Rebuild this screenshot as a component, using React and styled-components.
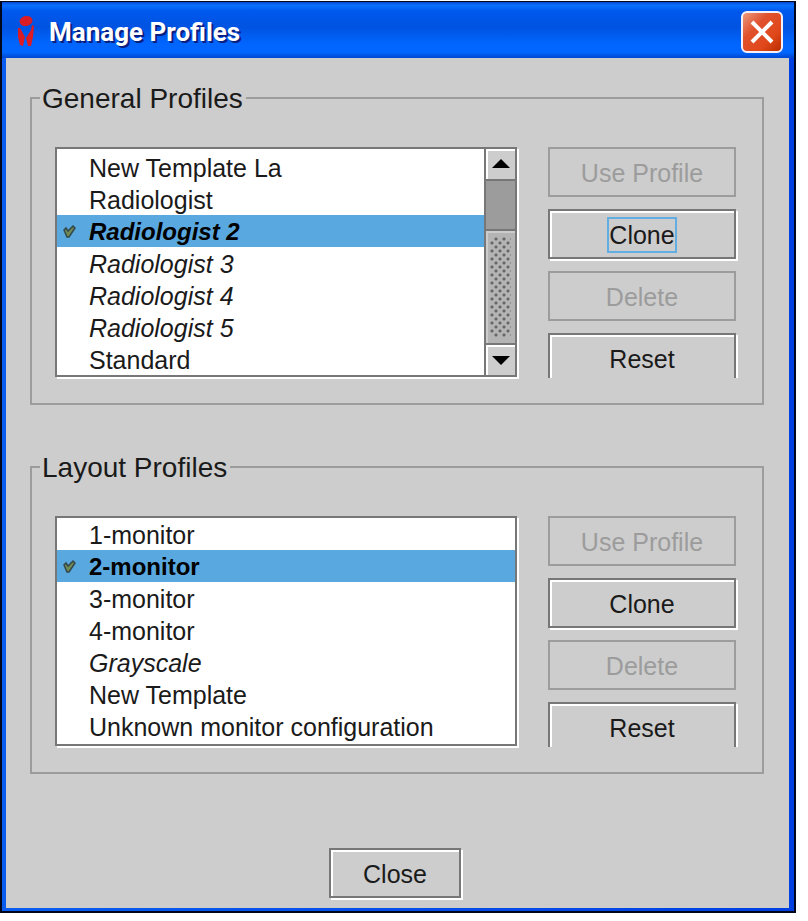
import { useState } from "react";
import styled, { createGlobalStyle } from "styled-components";

const generalProfiles = [
  { name: "New Template La" },
  { name: "Radiologist" },
  { name: "Radiologist 2", custom: true },
  { name: "Radiologist 3", custom: true },
  { name: "Radiologist 4", custom: true },
  { name: "Radiologist 5", custom: true },
  { name: "Standard" },
];

const layoutProfiles = [
  { name: "1-monitor" },
  { name: "2-monitor" },
  { name: "3-monitor" },
  { name: "4-monitor" },
  { name: "Grayscale", custom: true },
  { name: "New Template" },
  { name: "Unknown monitor configuration" },
];

function ProfileGroup({ title, profiles, initial, scrollable, focused }) {
  const [selected, setSelected] = useState(initial);

  return (
    <Group>
      <Legend>{title}</Legend>
      <GroupContent>
        <ListBox>
          <ProfileList role="listbox" aria-label={title} $inset={scrollable}>
            {profiles.map((profile) => (
              <ProfileItem
                key={profile.name}
                role="option"
                aria-selected={profile.name === selected}
                $selected={profile.name === selected}
                $custom={profile.custom}
                onClick={() => setSelected(profile.name)}
              >
                <Marker>{profile.name === selected && <CheckIcon />}</Marker>
                {profile.name}
              </ProfileItem>
            ))}
          </ProfileList>
          {scrollable && (
            <ScrollBar>
              <ScrollButton type="button" aria-label="Scroll up">
                <svg width="18" height="10" viewBox="0 0 18 10">
                  <path d="M9 0 L18 9 H0 Z" />
                </svg>
              </ScrollButton>
              <ScrollTrack />
              <ScrollThumb />
              <ScrollButton type="button" aria-label="Scroll down">
                <svg width="18" height="10" viewBox="0 0 18 10">
                  <path d="M0 1 H18 L9 10 Z" />
                </svg>
              </ScrollButton>
            </ScrollBar>
          )}
        </ListBox>
        <Actions>
          <Button type="button" disabled>
            Use Profile
          </Button>
          <Button type="button">
            <ButtonLabel $focused={focused}>Clone</ButtonLabel>
          </Button>
          <Button type="button" disabled>
            Delete
          </Button>
          <Button type="button">Reset</Button>
        </Actions>
      </GroupContent>
    </Group>
  );
}

function CheckIcon() {
  return (
    <svg width="14" height="16" viewBox="0 0 14 16" fill="none">
      <path d="M1 6 L3 4 L5 7 L10 2 L12 4 L6 13 L4 13 Z" fill="#6f8a55" />
      <path
        d="M1 6 L3 4 L5 7 L10 2 L12 4 L6 13 L4 13 Z"
        stroke="#34484a"
        strokeWidth="1.5"
      />
    </svg>
  );
}

function Logo() {
  return (
    <svg width="18" height="34" viewBox="0 0 18 34" fill="#dc1c24">
      <ellipse cx="9" cy="6" rx="6.5" ry="5" transform="rotate(-12 9 6)" />
      <path d="M1 13 L3 13 L8 22 L6 31 L3 30 L1 22 Z" />
      <path d="M15 10 L17 11 L16 22 L14 31 L11 31 L9 23 L14 15 Z" />
    </svg>
  );
}

export default function App() {
  return (
    <>
      <GlobalStyle />
      <Dialog role="dialog" aria-labelledby="dialog-title">
        <TitleBar>
          <Logo />
          <Title id="dialog-title">Manage Profiles</Title>
          <CloseIconButton type="button" aria-label="Close window">
            <svg width="24" height="24" viewBox="0 0 24 24">
              <path
                d="M2 2 L22 22 M22 2 L2 22"
                stroke="#fff"
                strokeWidth="4"
              />
            </svg>
          </CloseIconButton>
        </TitleBar>
        <Content>
          <ProfileGroup
            title="General Profiles"
            profiles={generalProfiles}
            initial="Radiologist 2"
            scrollable
            focused
          />
          <ProfileGroup
            title="Layout Profiles"
            profiles={layoutProfiles}
            initial="2-monitor"
          />
          <Footer>
            <CloseButton type="button">Close</CloseButton>
          </Footer>
        </Content>
      </Dialog>
    </>
  );
}

const GlobalStyle = createGlobalStyle`
  * {
    box-sizing: border-box;
  }
  body {
    margin: 0;
    padding: 1px 12px 0 0;
    background: #fff;
    color: #1a1a1a;
    font-family: "Liberation Sans", Arial, sans-serif;
    font-size: 25px;
  }
`;

const Dialog = styled.main`
  border: 2px solid #00061c;
  border-top-width: 1px;
  background: linear-gradient(90deg, #0a5cf0, #0040e0);
  padding: 0 5px 3px 4px;
`;

const TitleBar = styled.header`
  display: flex;
  align-items: center;
  gap: 14px;
  height: 56px;
  margin: 0 -5px 0 -4px;
  padding: 4px 11px 0 15px;
  background: linear-gradient(
    #0a4ad0 0%,
    #0a70ff 6%,
    #0058ee 16%,
    #0053e1 45%,
    #0066ff 75%,
    #0066ff 90%,
    #0046d0 100%
  );
`;

const Title = styled.h1`
  flex: 1;
  margin: 0;
  color: #fff;
  font-family: Roboto, sans-serif;
  font-size: 26px;
  font-weight: 700;
  line-height: 32px;
  text-shadow: 2px 2px 0 #0a2080;
`;

const CloseIconButton = styled.button`
  display: grid;
  place-items: center;
  width: 42px;
  height: 42px;
  padding: 0;
  border: 2px solid #f4f0f8;
  border-radius: 6px;
  background: linear-gradient(135deg, #ec9a80, #e0512c 35%, #e0481a 70%, #b82c00);
`;

const Content = styled.div`
  display: flex;
  flex-direction: column;
  gap: 46px;
  padding: 24px 25px 10px 24px;
  background: #cdcdcd;
`;

const Group = styled.fieldset`
  min-width: 0;
  margin: 0;
  padding: 33px 26px 25px 24px;
  border: 2px solid #9c9c9c;
`;

const Legend = styled.legend`
  margin-left: -16px;
  padding: 2px 3px 0 2px;
  font-size: 28px;
  line-height: 30px;
`;

const GroupContent = styled.div`
  display: flex;
  gap: 30px;
  height: 231px;
`;

const ListBox = styled.div`
  display: flex;
  flex: 1;
  min-width: 0;
  margin: 0 1px 1px -1px;
  border: 2px solid #777;
  box-shadow: 2px 2px 0 #fff;
  background: #fff;
`;

const ProfileList = styled.ul`
  flex: 1;
  margin: 0;
  padding: ${({ $inset }) => ($inset ? "2px" : "0")} 0 0;
  overflow: hidden;
  list-style: none;
`;

const ProfileItem = styled.li`
  display: flex;
  align-items: center;
  height: 32px;
  padding-top: 2px;
  background: ${({ $selected }) => ($selected ? "#59a8df" : "transparent")};
  color: ${({ $selected }) => ($selected ? "#000" : "#1a1a1a")};
  font-size: ${({ $selected }) => ($selected ? "24px" : "25px")};
  font-style: ${({ $custom }) => ($custom ? "italic" : "normal")};
  font-weight: ${({ $selected }) => ($selected ? "700" : "400")};
  line-height: 30px;
  white-space: nowrap;
`;

const Marker = styled.span`
  display: flex;
  flex: none;
  width: 32px;
  padding-left: 6px;
`;

const ScrollBar = styled.div`
  display: flex;
  flex-direction: column;
  width: 31px;
  border-left: 2px solid #777;
`;

const ScrollButton = styled.button`
  display: grid;
  place-items: center;
  height: 30px;
  padding: 0;
  border: 0;
  background: #cdcdcd;
  box-shadow: inset 2px 2px 0 #fff;
`;

const ScrollTrack = styled.div`
  height: 50px;
  border-top: 2px solid #777;
  background: #9c9c9c;
`;

const ScrollThumb = styled.div`
  flex: 1;
  border: 0 solid #777;
  border-width: 2px 0;
  padding: 6px 4px;
  background:
    radial-gradient(circle at 2px 6px, #666 1px, transparent 2px) 0 0 / 8px 8px content-box,
    radial-gradient(circle at 6px 2px, #666 1px, transparent 2px) 0 0 / 8px 8px content-box,
    #b4b4b4;
  box-shadow: inset 2px 2px 0 #ccc;
`;

/* The last button runs past the bottom of the panel and is cut off. */
const Actions = styled.div`
  display: flex;
  flex-direction: column;
  gap: 12px;
  width: 190px;
  margin-right: -2px;
  overflow: hidden;
`;

const Button = styled.button`
  flex: none;
  width: 188px;
  height: 50px;
  padding: 2px 0 0;
  border: 2px solid #777;
  background: #cdcdcd;
  box-shadow: inset 2px 2px 0 #fff, 2px 2px 0 #fff;
  color: #1a1a1a;
  font: inherit;
  line-height: 32px;

  &:disabled {
    border-color: #9c9c9c;
    box-shadow: none;
    color: #9c9c9c;
  }
`;

const ButtonLabel = styled.span`
  display: inline-block;
  outline: ${({ $focused }) => ($focused ? "2px solid #62aee2" : "none")};
`;

const Footer = styled.footer`
  display: flex;
  justify-content: center;
  padding: 28px 4px 0 0;
`;

const CloseButton = styled(Button)`
  width: 132px;
`;
